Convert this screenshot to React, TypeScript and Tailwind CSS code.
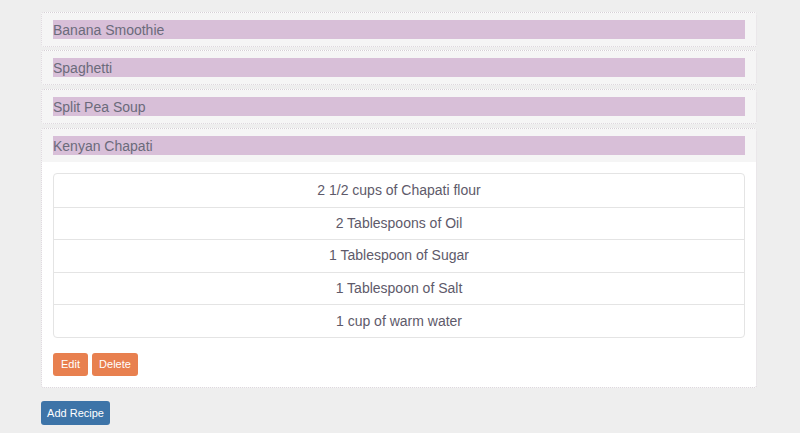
const RECIPES = [
  {
    name: "Banana Smoothie",
    ingredients: [],
  },
  {
    name: "Spaghetti",
    ingredients: [],
  },
  {
    name: "Split Pea Soup",
    ingredients: [],
  },
  {
    name: "Kenyan Chapati",
    ingredients: [
      "2 1/2 cups of Chapati flour",
      "2 Tablespoons of Oil",
      "1 Tablespoon of Sugar",
      "1 Tablespoon of Salt",
      "1 cup of warm water",
    ],
  },
];

function App() {
  return (
    <div className="min-h-[433px] bg-[#eeeeee] pt-[12px] font-['Liberation_Sans',Arial,sans-serif]">
      <div className="ml-[41px] w-[716px] flex flex-col">
        {RECIPES.map((recipe, i) => {
          const open = i === RECIPES.length - 1;
          return (
            <div
              key={recipe.name}
              className={`border border-dotted border-[#d6d0d6] rounded-[3px] bg-white ${
                i === 0 ? "" : i === 1 ? "mt-[3px]" : "mt-[4px]"
              }`}
            >
              {/* Heading */}
              <div className="bg-[#f5f5f5] px-[11px] py-[7px]">
                <div className="h-[19px] bg-[#d8bfd8] flex items-center text-[14px] text-[#6b6b7b] leading-none">
                  {recipe.name}
                </div>
              </div>

              {/* Body */}
              {open && (
                <div className="p-[11px]">
                  <ul className="border border-[#e4e4e4] rounded-[4px]">
                    {recipe.ingredients.map((item, j) => (
                      <li
                        key={item}
                        className={`h-[32.6px] flex items-center justify-center text-[14px] text-[#5e5a6a] ${
                          j > 0 ? "border-t border-[#e4e4e4]" : ""
                        }`}
                      >
                        {item}
                      </li>
                    ))}
                  </ul>
                  <div className="flex gap-[4px] mt-[15px]">
                    <button className="h-[23px] w-[35px] rounded-[3px] bg-[#e8804f] text-white text-[11px]">
                      Edit
                    </button>
                    <button className="h-[23px] w-[46px] rounded-[3px] bg-[#e8804f] text-white text-[11px]">
                      Delete
                    </button>
                  </div>
                </div>
              )}
            </div>
          );
        })}
      </div>
      <button className="ml-[41px] mt-[13px] h-[24px] w-[69px] rounded-[3px] bg-[#3d74a8] text-white text-[11px]">
        Add Recipe
      </button>
    </div>
  );
}

export default App;
